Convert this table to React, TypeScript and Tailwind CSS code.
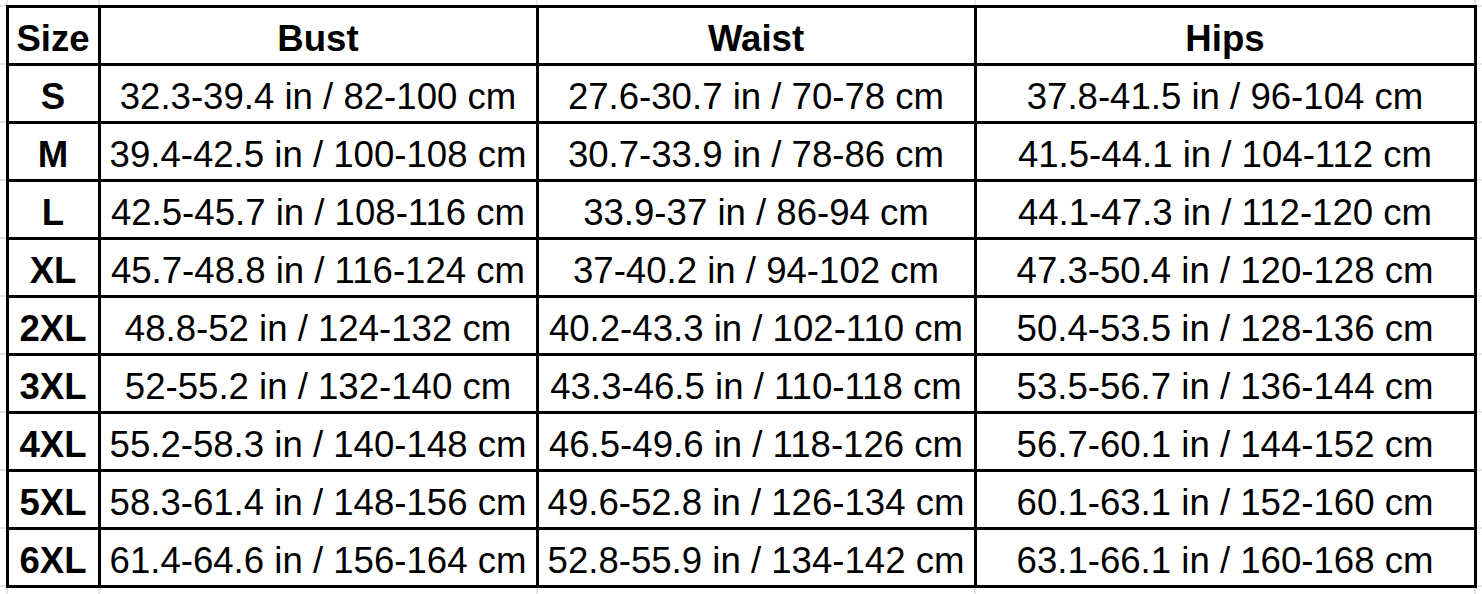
const rows: [string, string, string, string][] = [
  ['S', '32.3-39.4 in / 82-100 cm', '27.6-30.7 in / 70-78 cm', '37.8-41.5 in / 96-104 cm'],
  ['M', '39.4-42.5 in / 100-108 cm', '30.7-33.9 in / 78-86 cm', '41.5-44.1 in / 104-112 cm'],
  ['L', '42.5-45.7 in / 108-116 cm', '33.9-37 in / 86-94 cm', '44.1-47.3 in / 112-120 cm'],
  ['XL', '45.7-48.8 in / 116-124 cm', '37-40.2 in / 94-102 cm', '47.3-50.4 in / 120-128 cm'],
  ['2XL', '48.8-52 in / 124-132 cm', '40.2-43.3 in / 102-110 cm', '50.4-53.5 in / 128-136 cm'],
  ['3XL', '52-55.2 in / 132-140 cm', '43.3-46.5 in / 110-118 cm', '53.5-56.7 in / 136-144 cm'],
  ['4XL', '55.2-58.3 in / 140-148 cm', '46.5-49.6 in / 118-126 cm', '56.7-60.1 in / 144-152 cm'],
  ['5XL', '58.3-61.4 in / 148-156 cm', '49.6-52.8 in / 126-134 cm', '60.1-63.1 in / 152-160 cm'],
  ['6XL', '61.4-64.6 in / 156-164 cm', '52.8-55.9 in / 134-142 cm', '63.1-66.1 in / 160-168 cm'],
];

// faint spreadsheet gridlines around the chart
const edge = 'p-0 border-2 border-[#e4e4e4]';
const cell = 'px-0 pt-[8px] pb-0 h-[58px] border-[3px] border-black text-center align-middle leading-none';

function EdgeRow({ pos }: { pos: 'top' | 'bottom' }) {
  const side = pos === 'top' ? 'border-t-0' : 'border-b-0';
  const h = pos === 'top' ? 'h-[6px]' : 'h-[10px]';
  return (
    <tr className={h}>
      <td className={`${edge} ${side} border-l-0`} />
      <td className={`${edge} ${side}`} />
      <td className={`${edge} ${side}`} />
      <td className={`${edge} ${side}`} />
      <td className={`${edge} ${side}`} />
      <td className={`${edge} ${side} border-r-0`} />
    </tr>
  );
}

export default function App() {
  return (
    <div className="w-[1482px] h-[594px] overflow-hidden bg-white text-black font-['Liberation_Sans',Arial,sans-serif] text-[36.6px]">
      <table className="table-fixed border-collapse">
        <colgroup>
          <col className="w-[7px]" />
          <col className="w-[92px]" />
          <col className="w-[438px]" />
          <col className="w-[438px]" />
          <col className="w-[500px]" />
          <col className="w-[7px]" />
        </colgroup>
        <tbody>
          <EdgeRow pos="top" />
          <tr>
            <td className={`${edge} border-l-0`} />
            <th className={`${cell} font-bold`}>Size</th>
            <th className={`${cell} font-bold`}>Bust</th>
            <th className={`${cell} font-bold`}>Waist</th>
            <th className={`${cell} font-bold`}>Hips</th>
            <td className={`${edge} border-r-0`} />
          </tr>
          {rows.map(([size, bust, waist, hips]) => (
            <tr key={size}>
              <td className={`${edge} border-l-0`} />
              <td className={`${cell} font-bold`}>{size}</td>
              <td className={cell}>{bust}</td>
              <td className={cell}>{waist}</td>
              <td className={cell}>{hips}</td>
              <td className={`${edge} border-r-0`} />
            </tr>
          ))}
          <EdgeRow pos="bottom" />
        </tbody>
      </table>
    </div>
  );
}
